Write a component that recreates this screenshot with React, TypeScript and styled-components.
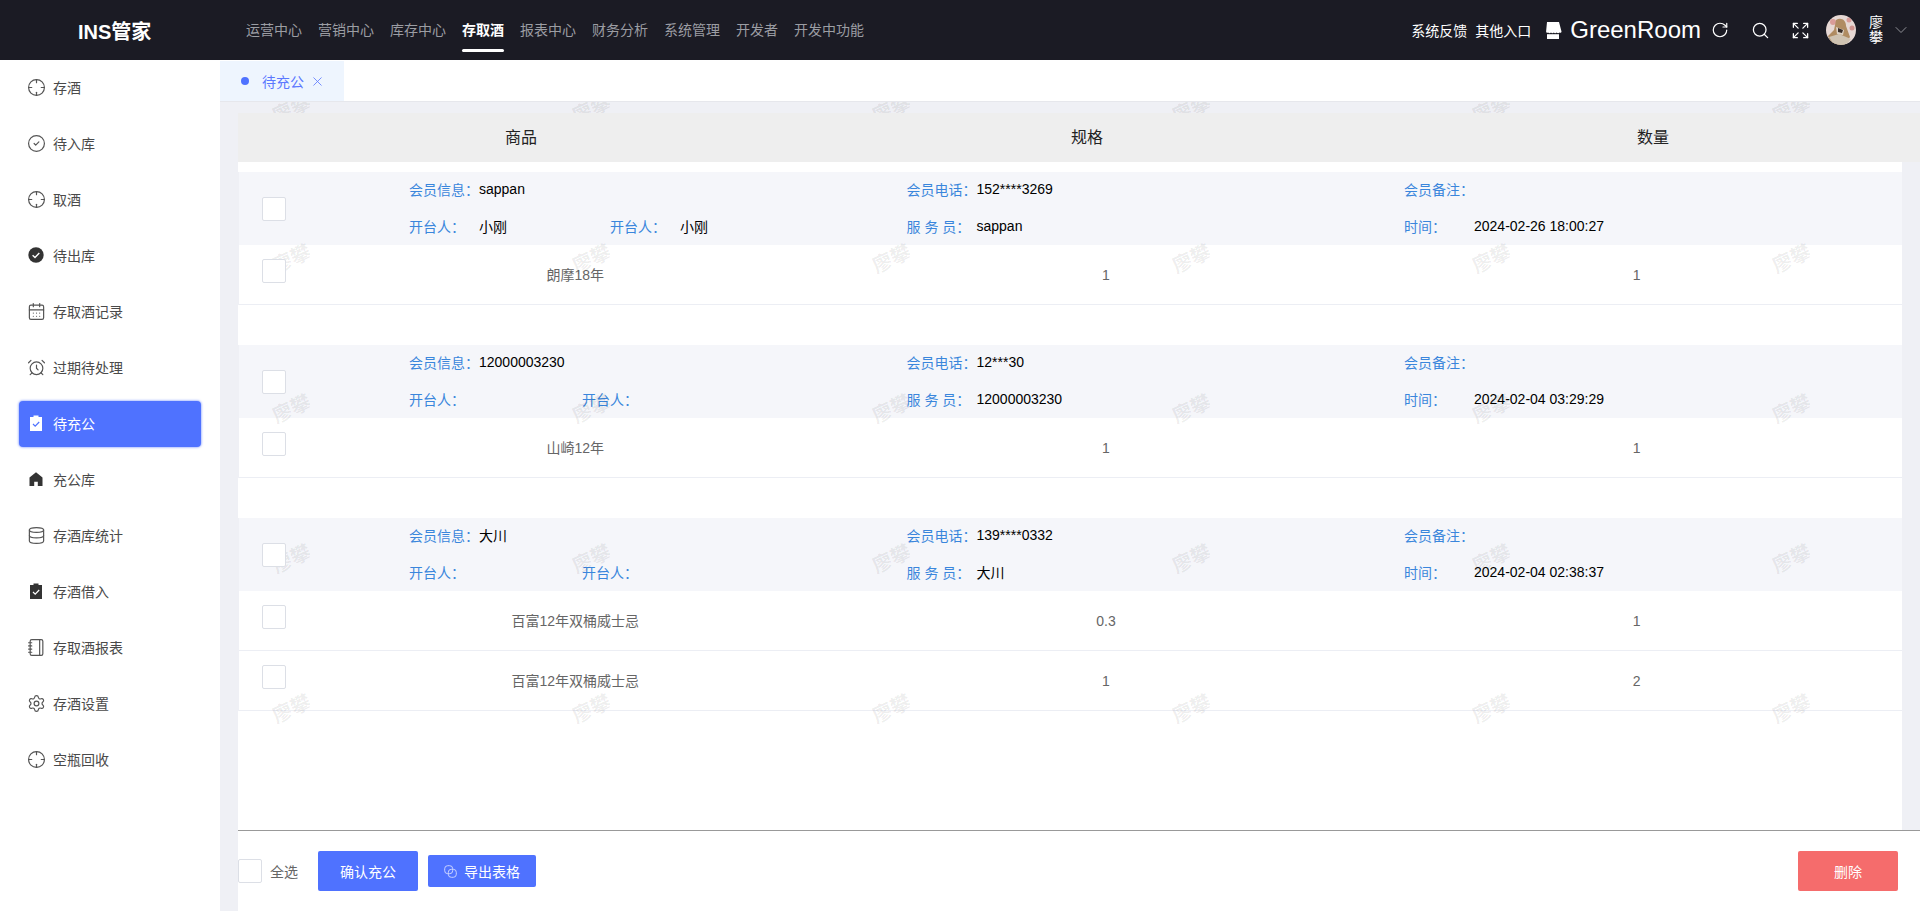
import React from 'react';
import styled, { createGlobalStyle } from 'styled-components';
import {
  AlarmClock,
  CalendarDays,
  ChevronDown,
  CircleCheck,
  Crosshair,
  Database,
  Expand,
  Notebook,
  RotateCw,
  Search,
  Settings,
  X,
} from 'lucide-react';

const FONT = '"Liberation Sans", "Noto Sans CJK SC", sans-serif';
const BLUE = '#4f72ff';

const GlobalStyle = createGlobalStyle`
  html, body, #root {
    margin: 0;
    height: 100%;
  }
  body {
    overflow: hidden;
    font-family: ${FONT};
    font-size: 14px;
  }
  * {
    box-sizing: border-box;
  }
`;

const Page = styled.div`
  display: flex;
  flex-direction: column;
  height: 100vh;
`;

const TopBar = styled.header`
  display: flex;
  align-items: center;
  flex: 0 0 60px;
  background: #1b1b24;
  color: #fff;
`;

const Logo = styled.div`
  flex: 0 0 246px;
  padding-left: 78px;
  font-size: 20px;
  font-weight: 700;
`;

const Nav = styled.nav`
  display: flex;
  gap: 16px;
`;

const NavItem = styled.a<{ $active?: boolean }>`
  position: relative;
  height: 60px;
  line-height: 60px;
  color: ${(p) => (p.$active ? '#fff' : '#9b9da3')};
  font-weight: ${(p) => (p.$active ? 700 : 400)};

  &::after {
    content: '';
    display: ${(p) => (p.$active ? 'block' : 'none')};
    position: absolute;
    left: 0;
    right: 0;
    bottom: 8px;
    height: 3px;
    border-radius: 2px;
    background: #fff;
  }
`;

const TopRight = styled.div`
  display: flex;
  align-items: center;
  margin-left: auto;
  padding-right: 9px;
`;

const TopLink = styled.a`
  margin-right: 8px;
  color: #fff;
`;

const ShopName = styled.div`
  display: flex;
  align-items: center;
  gap: 8px;
  margin: 0 -1px 0 5px;
  font-size: 24px;
`;

const IconButton = styled.span`
  display: flex;
  justify-content: center;
  width: 40px;
`;

const AvatarImage = styled.svg`
  margin-left: 6px;
  border-radius: 50%;
`;

const UserName = styled.span`
  width: 15px;
  margin-left: 13px;
  line-height: 15px;
`;

const Caret = styled(ChevronDown)`
  margin-left: 7px;
  color: #8f9096;
`;

const Body = styled.div`
  display: flex;
  flex: 1;
  min-height: 0;
`;

const Sidebar = styled.aside`
  flex: 0 0 220px;
  padding: 5px 19px 0;
  background: #fff;
`;

const MenuItem = styled.a<{ $active?: boolean }>`
  display: flex;
  align-items: center;
  gap: 9px;
  height: 46px;
  margin-bottom: 10px;
  padding: 0 0 2px 9px;
  border-radius: 4px;
  color: ${(p) => (p.$active ? '#fff' : '#4a4a4a')};
  background: ${(p) => (p.$active ? BLUE : 'transparent')};
  box-shadow: ${(p) => (p.$active ? '0 0 2px 1px rgba(120, 145, 255, 0.55)' : 'none')};
`;

const MenuIcon = styled.span`
  display: flex;
  align-items: center;
  justify-content: center;
  flex: 0 0 16px;
  width: 16px;
  min-width: 0;
  height: 16px;

  svg {
    flex: none;
  }
`;

const Main = styled.main`
  display: flex;
  flex-direction: column;
  flex: 1;
  min-width: 0;
  background: #eff0f5;
`;

const TabBar = styled.div`
  display: flex;
  flex: 0 0 42px;
  padding-top: 1px;
  border-bottom: 1px solid #e6e7ec;
  background: #fff;
`;

const Tab = styled.div`
  display: flex;
  align-items: center;
  width: 124px;
  padding-left: 21px;
  color: #5b78ff;
  background: #eef5fe;
`;

const TabDot = styled.i`
  width: 8px;
  height: 8px;
  margin-right: 13px;
  border-radius: 50%;
  background: ${BLUE};
`;

const TabClose = styled(X)`
  margin-left: 6px;
`;

const Content = styled.div`
  position: relative;
  display: flex;
  flex-direction: column;
  flex: 1;
  min-height: 0;
  padding-top: 11px;
  overflow: hidden;
`;

const WatermarkLayer = styled.div`
  position: absolute;
  left: -79px;
  top: -70px;
  display: grid;
  grid-template-columns: repeat(7, 300px);
  grid-auto-rows: 150px;
  place-items: center;
  pointer-events: none;
`;

const Watermark = styled.span`
  font-size: 20px;
  font-weight: 700;
  color: rgba(0, 0, 0, 0.075);
  transform: rotate(-25deg);
`;

const TableHead = styled.div`
  position: relative;
  z-index: 1;
  display: grid;
  grid-template-columns: repeat(3, 566px);
  flex: 0 0 49px;
  width: 1698px;
  margin-left: 18px;
  background: #eee;
`;

const HeadCell = styled.div`
  font-size: 16px;
  line-height: 49px;
  text-align: center;
  color: #222;
`;

const Sheet = styled.div`
  flex: 1;
  min-height: 0;
  margin: 0 18px;
  padding-top: 10px;
  background: #fff;
`;

const Group = styled.section`
  margin-bottom: 40px;
  border-left: 1px solid #eff0f5;
`;

const GroupHead = styled.div`
  display: flex;
  align-items: center;
  height: 73px;
  padding-left: 23px;
  background: #f5f6fa;
`;

const Check = styled.span`
  position: relative;
  z-index: 1;
  display: block;
  flex: none;
  width: 24px;
  height: 24px;
  border: 1px solid #dcdfe6;
  border-radius: 2px;
  background: #fff;
`;

const InfoGrid = styled.div`
  display: grid;
  grid-template-columns: repeat(3, 497.5px);
  grid-auto-rows: 37px;
  margin: 0 0 2px 123px;
`;

const InfoCell = styled.div`
  display: flex;
  align-items: center;
`;

const InfoLabel = styled.span`
  flex: 0 0 70px;
  color: #3a86dc;
`;

const InfoValue = styled.span<{ $spaced?: boolean }>`
  margin-right: ${(p) => (p.$spaced ? '103px' : 0)};
  color: #000;
`;

const ItemRow = styled.div`
  display: grid;
  grid-template-columns: 71px repeat(3, 1fr);
  height: 60px;
  padding-top: 14px;
  border-bottom: 1px solid #eceef4;
`;

const ItemCheck = styled(Check)`
  margin-left: 23px;
`;

const ItemCell = styled.div`
  line-height: 32px;
  text-align: center;
  color: #666;
`;

const Footer = styled.footer`
  display: flex;
  align-items: center;
  flex: 0 0 81px;
  margin-left: 18px;
  padding-right: 22px;
  border-top: 1px solid #999;
  background: #fff;
`;

const SelectAll = styled.span`
  margin: 0 20px 0 8px;
  color: #666;
`;

const Button = styled.button<{ $danger?: boolean; $small?: boolean }>`
  display: flex;
  align-items: center;
  justify-content: center;
  gap: 7px;
  width: ${(p) => (p.$small ? '108px' : '100px')};
  height: ${(p) => (p.$small ? '32px' : '40px')};
  margin: ${(p) => (p.$small ? '0 0 0 10px' : 0)};
  margin-left: ${(p) => (p.$danger ? 'auto' : undefined)};
  border: 0;
  border-radius: 2px;
  color: #fff;
  background: ${(p) => (p.$danger ? '#f56c6c' : BLUE)};
  font-family: ${FONT};
  font-size: 14px;
`;

const StoreIcon = () => (
  <svg width="18" height="18" viewBox="0 0 18 18" fill="#fff">
    <path d="M3 1h12l2.500 9.500c0 1.400-1.300 1.600-2.100 1-.5 1-2.100 1-2.800 0-.6 1-2.200 1-2.800 0-.6 1-2.200 1-2.800 0-.7 1-2.300 1-2.800 0-.8.6-2.100.4-2.100-1z" />
    <path d="M3 13.200h12V18H3z" />
  </svg>
);

const Avatar = () => (
  <AvatarImage width="30" height="30" viewBox="0 0 30 30">
    <rect width="30" height="30" fill="#e6d8d4" />
    <circle cx="7" cy="7" r="3" fill="#d99c98" />
    <circle cx="23" cy="5" r="2.500" fill="#d99c98" />
    <circle cx="26" cy="13" r="2.500" fill="#d0948f" />
    <path d="M10 5c5-3 10 0 10 6l4 11-6 8H6L2 21l6-6z" fill="#b08c62" />
    <path d="M3 22l10-3 12 5-5 6H8z" fill="#cfc3b2" />
    <path d="M10 12l8 3-1 5-6-1z" fill="#ded3c6" />
    <path d="M12 13l5 2-1 3-4-1z" fill="#3a2f2a" />
  </AvatarImage>
);

const SolidCheck = () => (
  <svg width="16" height="16" viewBox="0 0 16 16">
    <circle cx="8" cy="8" r="7.700" fill="#333" />
    <path d="M4.600 8.200l2.400 2.300 4.300-4.500" fill="none" stroke="#fff" strokeWidth="1.400" />
  </svg>
);

const Clipboard = ({ fill, mark }: { fill: string; mark: string }) => (
  <svg width="16" height="16" viewBox="0 0 16 16">
    <path d="M5.500 0.500h5v1.500H14v14H2V2h3.500z" fill={fill} />
    <path d="M5 9l2.200 2.200L11.200 7" fill="none" stroke={mark} strokeWidth="1.200" />
  </svg>
);

const HomeIcon = () => (
  <svg width="16" height="16" viewBox="0 0 16 16" fill="#333">
    <path d="M8 1.200L1.500 6.500V15h4.700v-4.200h3.600V15h4.700V6.500z" />
  </svg>
);

const ExportIcon = () => (
  <svg width="13" height="13" viewBox="0 0 13 13" fill="none" stroke="#c9d3ff" strokeWidth="1">
    <rect x="0.700" y="0.700" width="8" height="8" rx="3" />
    <rect x="4.300" y="4.300" width="8" height="8" rx="3" />
  </svg>
);

const lineIcon = { size: 19, color: '#555', strokeWidth: 1.5 };

const menu = [
  { label: '存酒', icon: <Crosshair {...lineIcon} /> },
  { label: '待入库', icon: <CircleCheck {...lineIcon} /> },
  { label: '取酒', icon: <Crosshair {...lineIcon} /> },
  { label: '待出库', icon: <SolidCheck /> },
  { label: '存取酒记录', icon: <CalendarDays {...lineIcon} /> },
  { label: '过期待处理', icon: <AlarmClock {...lineIcon} /> },
  { label: '待充公', icon: <Clipboard fill="#fff" mark={BLUE} />, active: true },
  { label: '充公库', icon: <HomeIcon /> },
  { label: '存酒库统计', icon: <Database {...lineIcon} /> },
  { label: '存酒借入', icon: <Clipboard fill="#333" mark="#fff" /> },
  { label: '存取酒报表', icon: <Notebook {...lineIcon} /> },
  { label: '存酒设置', icon: <Settings {...lineIcon} /> },
  { label: '空瓶回收', icon: <Crosshair {...lineIcon} /> },
];

const navItems = ['运营中心', '营销中心', '库存中心', '存取酒', '报表中心', '财务分析', '系统管理', '开发者', '开发中功能'];

const groups = [
  {
    member: 'sappan',
    phone: '152****3269',
    opener: '小刚',
    waiter: 'sappan',
    time: '2024-02-26 18:00:27',
    items: [{ name: '朗摩18年', spec: '1', qty: '1' }],
  },
  {
    member: '12000003230',
    phone: '12***30',
    opener: '',
    waiter: '12000003230',
    time: '2024-02-04 03:29:29',
    items: [{ name: '山崎12年', spec: '1', qty: '1' }],
  },
  {
    member: '大川',
    phone: '139****0332',
    opener: '',
    waiter: '大川',
    time: '2024-02-04 02:38:37',
    items: [
      { name: '百富12年双桶威士忌', spec: '0.3', qty: '1' },
      { name: '百富12年双桶威士忌', spec: '1', qty: '2' },
    ],
  },
];

const App = () => {
  return (
    <Page>
      <GlobalStyle />
      <TopBar>
        <Logo>INS管家</Logo>
        <Nav>
          {navItems.map((item) => (
            <NavItem key={item} $active={item === '存取酒'}>
              {item}
            </NavItem>
          ))}
        </Nav>
        <TopRight>
          <TopLink>系统反馈</TopLink>
          <TopLink>其他入口</TopLink>
          <ShopName>
            <StoreIcon />
            GreenRoom
          </ShopName>
          <IconButton>
            <RotateCw size={18} strokeWidth={1.6} />
          </IconButton>
          <IconButton>
            <Search size={19} strokeWidth={1.6} />
          </IconButton>
          <IconButton>
            <Expand size={19} strokeWidth={1.6} />
          </IconButton>
          <Avatar />
          <UserName>廖攀</UserName>
          <Caret size={20} strokeWidth={1.2} />
        </TopRight>
      </TopBar>
      <Body>
        <Sidebar>
          {menu.map((item) => (
            <MenuItem key={item.label} $active={item.active}>
              <MenuIcon>{item.icon}</MenuIcon>
              {item.label}
            </MenuItem>
          ))}
        </Sidebar>
        <Main>
          <TabBar>
            <Tab>
              <TabDot />
              待充公
              <TabClose size={15} strokeWidth={1.3} />
            </Tab>
          </TabBar>
          <Content>
            <WatermarkLayer>
              {Array.from({ length: 42 }, (_, i) => (
                <Watermark key={i}>廖攀</Watermark>
              ))}
            </WatermarkLayer>
            <TableHead>
              <HeadCell>商品</HeadCell>
              <HeadCell>规格</HeadCell>
              <HeadCell>数量</HeadCell>
            </TableHead>
            <Sheet>
              {groups.map((group) => (
                <Group key={group.time}>
                  <GroupHead>
                    <Check />
                    <InfoGrid>
                      <InfoCell>
                        <InfoLabel>会员信息：</InfoLabel>
                        <InfoValue>{group.member}</InfoValue>
                      </InfoCell>
                      <InfoCell>
                        <InfoLabel>会员电话：</InfoLabel>
                        <InfoValue>{group.phone}</InfoValue>
                      </InfoCell>
                      <InfoCell>
                        <InfoLabel>会员备注：</InfoLabel>
                      </InfoCell>
                      <InfoCell>
                        <InfoLabel>开台人：</InfoLabel>
                        <InfoValue $spaced>{group.opener}</InfoValue>
                        <InfoLabel>开台人：</InfoLabel>
                        <InfoValue>{group.opener}</InfoValue>
                      </InfoCell>
                      <InfoCell>
                        <InfoLabel>服 务 员：</InfoLabel>
                        <InfoValue>{group.waiter}</InfoValue>
                      </InfoCell>
                      <InfoCell>
                        <InfoLabel>时间：</InfoLabel>
                        <InfoValue>{group.time}</InfoValue>
                      </InfoCell>
                    </InfoGrid>
                  </GroupHead>
                  {group.items.map((item) => (
                    <ItemRow key={item.name + item.qty}>
                      <ItemCheck />
                      <ItemCell>{item.name}</ItemCell>
                      <ItemCell>{item.spec}</ItemCell>
                      <ItemCell>{item.qty}</ItemCell>
                    </ItemRow>
                  ))}
                </Group>
              ))}
            </Sheet>
          </Content>
          <Footer>
            <Check />
            <SelectAll>全选</SelectAll>
            <Button>确认充公</Button>
            <Button $small>
              <ExportIcon />
              导出表格
            </Button>
            <Button $danger>删除</Button>
          </Footer>
        </Main>
      </Body>
    </Page>
  );
};

export default App;
